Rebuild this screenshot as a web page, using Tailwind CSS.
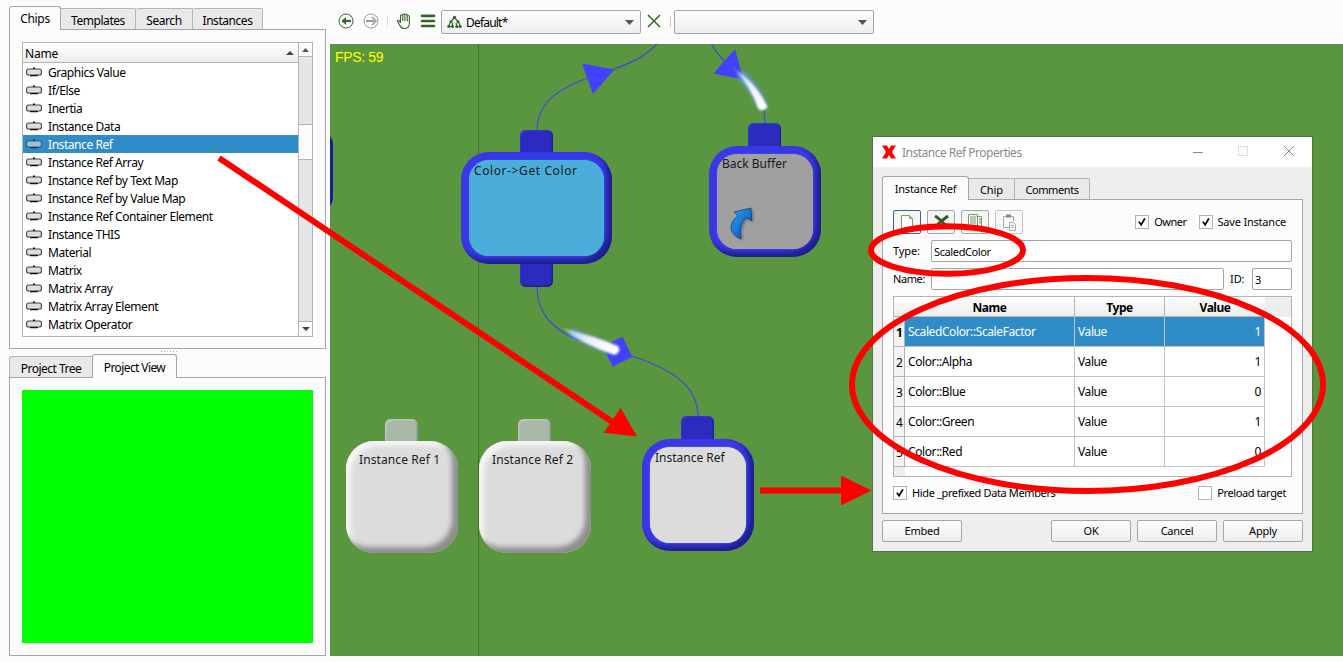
<!DOCTYPE html>
<html lang="en">
<head>
<meta charset="utf-8">
<title>Instance Ref</title>
<script src="https://cdn.jsdelivr.net/npm/@tailwindcss/browser@4"></script>
</head>
<body class="relative flex h-[662px] w-[1343px] overflow-hidden bg-[#fcfcfc] font-['Noto_Sans',sans-serif] text-[12px] leading-4 tracking-[-0.3px] whitespace-nowrap text-black">
<svg class="absolute h-0 w-0">
  <defs>
    <symbol id="chip" viewBox="0 0 16 10"><rect x=".6" y="2" width="14.8" height="6" rx="2" fill="#ddd" stroke="#444" stroke-width="1.1"/><path d="M7 .5h2v1.500H7zM4 8h8v1.300H4z" fill="#111"/></symbol>
    <symbol id="check" viewBox="0 0 14 14"><path d="M3.4 6.800l2.600 3.400 4.400-7.400" fill="none" stroke="#000" stroke-width="2"/></symbol>
    <linearGradient id="trail" x1="0" y1="0" x2="1" y2=".8"><stop offset="0" stop-color="#fff" stop-opacity=".3"/><stop offset=".5" stop-color="#eef"/><stop offset="1" stop-color="#fff"/></linearGradient>
    <linearGradient id="arrow" x1="0" y1="0" x2="1" y2="1"><stop stop-color="#28a8f8"/><stop offset="1" stop-color="#0644b0"/></linearGradient>
    <filter id="glow" x="-50%" y="-50%" width="200%" height="200%"><feGaussianBlur stdDeviation="2.500"/></filter>
    <filter id="soft"><feGaussianBlur stdDeviation=".8"/></filter>
  </defs>
</svg>

<!-- left docks -->
<aside class="flex w-[330px] shrink-0 flex-col pl-[9px] pt-[6px]">
  <div class="relative z-10 -mb-px flex h-[24px] items-end text-center">
    <div class="h-[24px] w-[52px] rounded-t-[3px] border border-b-0 border-[#a5a5a5] bg-[#fcfcfc] pt-[4px]">Chips</div>
    <div class="mb-px h-[21px] w-[75px] rounded-tr-[2px] border border-l-0 border-b-0 border-[#b4b4b4] bg-[#e9e9e9] pt-[4px] tracking-[-0.45px]">Templates</div>
    <div class="mb-px h-[21px] w-[57px] rounded-t-[2px] border border-l-0 border-b-0 border-[#b4b4b4] bg-[#e9e9e9] pt-[4px] tracking-[-0.45px]">Search</div>
    <div class="mb-px h-[21px] w-[70px] rounded-t-[2px] border border-l-0 border-b-0 border-[#b4b4b4] bg-[#e9e9e9] pt-[4px] tracking-[-0.45px]">Instances</div>
  </div>
  <section class="h-[320px] w-[317px] border border-[#a5a5a5] px-3 pt-3">
    <div class="flex h-[295px] w-[291px] border border-[#b4b4b4] bg-white">
      <div class="w-[276px]">
        <div class="flex h-[20px] items-center justify-between border-b border-[#b4b4b4] bg-linear-to-b from-white to-[#ececec] pl-[2px] pr-[4px]"><span class="pt-[2px] tracking-[-0.22px]">Name</span><svg class="h-[4px] w-[8px]"><path d="M0 4L4 0L8 4z" fill="#444"/></svg></div>
        <ul id="chips"></ul>
      </div>
      <div class="flex w-[14px] flex-col border-l border-[#b4b4b4] bg-[#e6e6e6]">
        <div class="flex h-[14px] items-center justify-center border-b border-[#b4b4b4] bg-[#fcfcfc]"><svg class="h-[4px] w-[7px]"><path d="M0 4L3.500 0L7 4z" fill="#555"/></svg></div>
        <div class="mt-[67px] h-[36px] border-y border-[#b4b4b4] bg-[#fcfcfc]"></div>
        <div class="mt-auto flex h-[15px] items-center justify-center border-t border-[#b4b4b4] bg-[#fcfcfc]"><svg class="h-[4px] w-[8px]"><path d="M0 0L4 4L8 0z" fill="#444"/></svg></div>
      </div>
    </div>
  </section>
  <div class="ml-[152px] mt-[2px] h-[1px] w-[17px] bg-[repeating-linear-gradient(90deg,#aaa_0_1px,transparent_1px_3px)]"></div>
  <div class="relative z-10 -mb-px mt-[2px] flex h-[24px] items-end text-center">
    <div class="mb-px h-[21px] w-[83px] rounded-tl-[3px] border border-r-0 border-b-0 border-[#b4b4b4] bg-[#e9e9e9] pt-[4px] tracking-[-0.5px]">Project Tree</div>
    <div class="h-[24px] w-[85px] rounded-t-[3px] border border-b-0 border-[#a5a5a5] bg-[#fcfcfc] pt-[5px] tracking-[-0.6px]">Project View</div>
  </div>
  <section class="h-[279px] w-[317px] border border-[#a5a5a5] p-3"><div class="h-[253px] w-[291px] bg-[#00ff00]"></div></section>
</aside>

<main class="flex w-[1013px] flex-col">
  <div class="flex h-[44px] items-center">
    <svg class="h-[44px] w-[111px]" fill="none">
      <g stroke="#36652a"><circle cx="16" cy="21" r="7"/><path d="M12.500 21H21" stroke-width="2.200"/><path d="M16 17l-4.500 4 4.500 4z" fill="#36652a" stroke="none"/></g>
      <g stroke="#999"><circle cx="41" cy="21" r="7"/><path d="M36 21h8" stroke-width="2"/><path d="M42 17l4 4-4 4" stroke-width="1.500"/></g>
      <path d="M57.500 15v12" stroke="#ddd" stroke-width="1"/>
      <path d="M70.500 22v-6.500q1-1.500 2 0M72.700 21v-6q1.100-2 2.200 0v6M75 14.700q1.200-1.500 2.200.3v6.500M77.200 16q1.300-1.200 2.200.5v7.500q-.5 4.500-5 4.500-3.500 0-4.500-3l-2.600-4.500q.5-1.500 2 0l1.500 2" stroke="#36652a" stroke-width="1.100"/>
      <path d="M92 15.800h12M92 21h12M92 26h12" stroke="#36652a" stroke-width="2.700" stroke-linecap="round"/>
    </svg>
    <div class="flex h-[24px] w-[200px] items-center rounded-[2px] border border-[#a5a5a5] bg-linear-to-b from-[#fdfdfd] to-[#eee] pl-[5px] pr-[6px]">
      <svg class="h-[14px] w-[15px]" fill="#36652a"><path d="M7.500 2.500L3.500 7L1.500 11.500H5L5.700 8M7.500 2.500L11.500 7L13.500 11.500H10L9 8" fill="none" stroke="#36652a" stroke-width="1.200"/><circle cx="7.500" cy="2.500" r="1.700"/><circle cx="4" cy="6.800" r="1.500"/><circle cx="11" cy="6.800" r="1.500"/><circle cx="1.800" cy="11.500" r="1.500"/><circle cx="5.500" cy="11.500" r="1.500"/><circle cx="9.700" cy="11.500" r="1.500"/><circle cx="13.200" cy="11.500" r="1.500"/></svg>
      <span class="ml-[4px] pt-px tracking-[-0.8px]">Default*</span><svg class="ml-auto h-[5px] w-[9px]"><path d="M0 0L4.500 5L9 0z" fill="#555"/></svg>
    </div>
    <svg class="h-[44px] w-[33px]"><path d="M7 15l12 12M19 15L7 27" stroke="#36652a" stroke-width="1.500"/><path d="M29.500 16v11" stroke="#ccc"/></svg>
    <div class="flex h-[24px] w-[200px] items-center rounded-[2px] border border-[#a5a5a5] bg-linear-to-b from-[#fdfdfd] to-[#eee] pr-[6px]"><svg class="ml-auto h-[5px] w-[9px]"><path d="M0 0L4.500 5L9 0z" fill="#555"/></svg></div>
  </div>

  <!-- graph canvas -->
  <div class="relative h-[612px] overflow-hidden bg-[#5a953f] tracking-[0.25px] text-[#151c20]">
    <div class="absolute left-[148px] top-0 h-full w-px bg-[#41702e]"></div>
    <div class="absolute -left-[109px] top-[88px] h-[78px] w-[112px] rounded-[12px] bg-[#1d1d91]"></div>
    <span class="absolute left-[5px] top-[5px] font-['Liberation_Sans',sans-serif] text-[14px] tracking-[-0.35px] text-[#ffff00]">FPS: 59</span>
    <svg class="absolute left-0 top-0 h-[612px] w-[1013px]" viewBox="330 44 1013 612" fill="none">
      <g stroke="#4545df" stroke-width="1.200">
        <path d="M537 131C537 100 563 87 590 77L614 69C637 61 648 54 658 43"/>
        <path d="M711 43Q716 53 728 65M764 110L765 124"/>
        <path d="M537 286C537 314 552 329 580 341M632 356C680 372 698 390 698 417"/>
      </g>
      <g fill="#4141ff"><path d="M582 63.500L614.500 69.500L593 94z"/><path d="M735 49L713.500 73.500L743.500 79.500z"/><path d="M622.500 336.700L632.500 357L612.500 366.500L603 346z"/></g>
      <path d="M740 74Q755 87 763 107" stroke="#5a9cff" stroke-width="8" opacity=".9" filter="url(#glow)"/>
      <path d="M733 68Q756 82 767.500 107Q764 112 758.500 109Q750 85 733 68z" fill="url(#trail)" filter="url(#soft)"/>
      <path d="M570 332Q588 341 613 350" stroke="#5a9cff" stroke-width="7" opacity=".9" filter="url(#glow)"/>
      <path d="M562 328Q594 336 618 346Q622 351 615 355Q584 345 562 328z" fill="url(#trail)" filter="url(#soft)"/>
    </svg>
    <div class="absolute left-[190px] top-[86px] h-[30px] w-[33px] rounded-[6px] bg-[#2b2bbd] shadow-[inset_-1px_-1px_2px_#1c1c85,inset_1px_1px_2px_#3b3bdd]"></div>
    <div class="absolute left-[190px] top-[212px] h-[31px] w-[33px] rounded-[6px] bg-[#2b2bbd] shadow-[inset_-1px_-1px_2px_#1c1c85,inset_1px_1px_2px_#3b3bdd]"></div>
    <div class="absolute left-[131px] top-[108px] h-[112px] w-[151px] rounded-[28px] bg-[#3838e6] p-[8px] shadow-[inset_-5px_-5px_5px_#1f1f8f]"><div class="h-full rounded-[20px] bg-[#4badda] pl-[5px] pt-[3px] tracking-[0.6px] shadow-[0_0_1px_#4badda]">Color-&gt;Get Color</div></div>
    <div class="absolute left-[418px] top-[79px] h-[30px] w-[33px] rounded-[6px] bg-[#2b2bbd] shadow-[inset_-1px_-1px_2px_#1c1c85,inset_1px_1px_2px_#3b3bdd]"></div>
    <div class="absolute left-[379px] top-[102px] h-[111px] w-[112px] rounded-[28px] bg-[#3838e6] p-[8px] shadow-[inset_-5px_-5px_5px_#1f1f8f]">
      <div class="h-full rounded-[20px] bg-[#a0a0a0] pl-[5px] pt-[2px] tracking-[0px] shadow-[0_0_1px_#a0a0a0]">Back Buffer
        <svg class="ml-[7px] mt-[34px] h-[40px] w-[32px] overflow-visible"><path d="M5.300 6L22 2L22.700 15L17 11.500Q9 19 12 33Q2 29 2 21Q3 14 9 10z" fill="#444" opacity=".5" filter="url(#soft)" transform="translate(2 1.500)"/><path d="M5.300 6L22 2L22.700 15L17 11.500Q9 19 12 33Q2 29 2 21Q3 14 9 10z" fill="url(#arrow)" stroke="#143f7c" stroke-width=".8"/></svg>
      </div>
    </div>
    <div class="absolute left-[351px] top-[372px] h-[30px] w-[33px] rounded-[6px] bg-[#2b2bbd] shadow-[inset_-1px_-1px_2px_#1c1c85,inset_1px_1px_2px_#3b3bdd]"></div>
    <div class="absolute left-[312px] top-[395px] h-[112px] w-[112px] rounded-[28px] bg-[#3838e6] p-[8px] shadow-[inset_-5px_-5px_5px_#1f1f8f]"><div class="h-full rounded-[20px] bg-[#dcdcdc] pl-[5px] pt-[3px] tracking-[0px] shadow-[0_0_1px_#dcdcdc]">Instance Ref</div></div>
    <div class="absolute left-[55px] top-[375px] h-[30px] w-[33px] rounded-[6px] bg-[#a9b9a8] shadow-[inset_-1px_-1px_2px_#7c887b,inset_1px_1px_2px_#c7d1c6]"></div>
    <div class="absolute left-[16px] top-[397px] h-[112px] w-[112px] rounded-[28px] bg-[#dcdcdc] pl-[13px] pt-[11px] tracking-[0.1px] shadow-[inset_-6px_-6px_5px_#8e8e8e,inset_5px_5px_5px_#f5f5f5]">Instance Ref 1</div>
    <div class="absolute left-[188px] top-[375px] h-[30px] w-[33px] rounded-[6px] bg-[#a9b9a8] shadow-[inset_-1px_-1px_2px_#7c887b,inset_1px_1px_2px_#c7d1c6]"></div>
    <div class="absolute left-[149px] top-[397px] h-[112px] w-[112px] rounded-[28px] bg-[#dcdcdc] pl-[13px] pt-[11px] tracking-[0.1px] shadow-[inset_-6px_-6px_5px_#8e8e8e,inset_5px_5px_5px_#f5f5f5]">Instance Ref 2</div>
  </div>
</main>

<!-- properties dialog -->
<div class="absolute left-[872px] top-[136px] flex h-[416px] w-[441px] flex-col border border-[#4f7540] bg-[#eeeeee] text-[11px] leading-4 tracking-[-0.1px]">
  <header class="flex h-[30px] items-center bg-white pl-[9px] text-[12px] tracking-[-0.5px] text-[#8a8a8a]">
    <svg class="h-[14px] w-[14px]"><path d="M0 .5h5l2 3.500 2-3.500h5L10 7l4 6.500H9l-2-3.500-2 3.500H0L4 7z" fill="#f00"/></svg>
    <span class="ml-[6px] pt-px">Instance Ref Properties</span>
    <svg class="ml-auto h-[30px] w-[123px]" fill="none"><path d="M4 15.500h10" stroke="#888"/><rect x="49.500" y="9.500" width="9" height="9" stroke="#ddd"/><path d="M95 9l10 10M105 9L95 19" stroke="#888"/></svg>
  </header>
  <div class="flex flex-1 flex-col px-[9px] pt-[9px]">
    <div class="relative z-10 -mb-px flex h-[24px] items-end text-center">
      <div class="h-[24px] w-[87px] rounded-t-[3px] border border-b-0 border-[#a5a5a5] bg-[#fcfcfc] pt-[4px] tracking-[-0.2px]">Instance Ref</div>
      <div class="mb-px h-[21px] w-[46px] border border-l-0 border-b-0 border-[#b4b4b4] bg-[#e9e9e9] pt-[3px]">Chip</div>
      <div class="mb-px h-[21px] w-[75px] rounded-tr-[2px] border border-l-0 border-b-0 border-[#b4b4b4] bg-[#e9e9e9] pt-[3px] tracking-[-0.4px]">Comments</div>
    </div>
    <section class="flex h-[315px] w-[421px] flex-col border border-[#a5a5a5] bg-[#fcfcfc] px-[10px] pt-[10px]">
      <div class="flex h-[24px] items-center gap-[6px]">
        <div class="h-[24px] w-[28px] rounded-[2px] border border-[#32688f] bg-[#f5f5f5]"><svg class="h-[22px] w-[26px]"><path d="M7.500 4.500h8l3 3v12h-11zM15.500 4.500v3h3" fill="#fff" stroke="#7b9b73"/></svg></div>
        <div class="h-[24px] w-[28px] rounded-[2px] border border-[#a5a5a5] bg-[#f5f5f5]"><svg class="h-[22px] w-[26px]"><path d="M7 5q4 2 13 12M20 5Q13 10 7 16" fill="none" stroke="#2f5e23" stroke-width="3"/></svg></div>
        <div class="h-[24px] w-[28px] rounded-[2px] border border-[#a5a5a5] bg-[#f5f5f5]"><svg class="h-[22px] w-[26px]"><path d="M14.500 5.500h5v12h-5M6.500 3.500h9v12h-9zM8 6h6M8 8h6M8 10h6M8 12h6M17 8h2M17 10h2M17 12h2" fill="none" stroke="#7b9b73"/></svg></div>
        <div class="h-[24px] w-[28px] rounded-[2px] border border-[#c5c5c5] bg-[#f8f8f8]"><svg class="h-[22px] w-[26px]" fill="none" stroke="#aaa"><path d="M13 16.500H7.500v-11h10V10"/><path d="M10 5h5" stroke-width="3" stroke="#888"/><path d="M13.500 11.500h4l2 2v6h-6z" fill="#fff"/><path d="M15 14.500h3M15 16.500h3"/></svg></div>
        <div class="ml-auto mr-[6px] flex items-center">
          <svg class="h-[14px] w-[14px] border border-[#b4b4b4] bg-white"><use href="#check"/></svg><span class="ml-[5px] mr-[12px] tracking-[-0.5px]">Owner</span>
          <svg class="h-[14px] w-[14px] border border-[#b4b4b4] bg-white"><use href="#check"/></svg><span class="ml-[5px] tracking-[-0.2px]">Save Instance</span>
        </div>
      </div>
      <div class="mt-[6px] flex h-[22px] items-center"><span class="w-[38px]">Type:</span><div class="h-[22px] flex-1 rounded-[2px] border border-[#a5a5a5] bg-white pl-[2px] pt-[3px] tracking-[-0.38px]">ScaledColor</div></div>
      <div class="mt-[6px] flex h-[22px] items-center"><span class="w-[38px] tracking-[-0.4px]">Name:</span><div class="h-[22px] w-[293px] rounded-[2px] border border-[#a5a5a5] bg-white"></div><span class="ml-[6px] w-[22px]">ID:</span><div class="h-[22px] w-[40px] rounded-[2px] border border-[#a5a5a5] bg-white pl-[2px] pt-[3px]">3</div></div>
      <div class="mt-[6px] h-[181px] w-[399px] border border-[#b4b4b4] bg-white">
        <div class="flex h-[20px] w-full bg-[#eee] text-center text-[12px] font-bold tracking-[-0.5px]">
          <div class="h-[20px] w-[181px] border-r border-b border-[#b4b4b4] bg-linear-to-b from-white to-[#ececec] pl-[11px] pt-[3px]">Name</div>
          <div class="h-[20px] w-[90px] border-r border-b border-[#b4b4b4] bg-linear-to-b from-white to-[#ececec] pt-[3px]">Type</div>
          <div class="h-[20px] w-[100px] border-b border-[#b4b4b4] bg-linear-to-b from-white to-[#ececec] pt-[3px]">Value</div>
        </div>
        <div id="members"></div>
        <div class="h-[9px] w-[11px] bg-[#eee]"></div>
      </div>
      <div class="mt-[9px] flex h-[14px] items-center">
        <svg class="h-[14px] w-[14px] border border-[#b4b4b4] bg-white"><use href="#check"/></svg><span class="ml-[5px] tracking-[-0.37px]">Hide _prefixed Data Members</span>
        <div class="ml-auto h-[14px] w-[14px] border border-[#b4b4b4] bg-white"></div><span class="ml-[5px] mr-[6px] tracking-[-0.37px]">Preload target</span>
      </div>
    </section>
    <div class="mt-[6px] flex h-[22px] gap-[6px] text-center leading-5 tracking-[-0.25px]">
      <div class="mr-auto w-[80px] rounded-[2px] border border-[#a5a5a5] bg-linear-to-b from-[#fdfdfd] to-[#eee]">Embed</div>
      <div class="w-[80px] rounded-[2px] border border-[#a5a5a5] bg-linear-to-b from-[#fdfdfd] to-[#eee]">OK</div>
      <div class="w-[80px] rounded-[2px] border border-[#a5a5a5] bg-linear-to-b from-[#fdfdfd] to-[#eee]">Cancel</div>
      <div class="w-[80px] rounded-[2px] border border-[#a5a5a5] bg-linear-to-b from-[#fdfdfd] to-[#eee]">Apply</div>
    </div>
  </div>
</div>

<!-- red annotations -->
<svg class="pointer-events-none absolute left-0 top-0 h-[662px] w-[1343px]" fill="none" stroke="#ff0000" stroke-width="6">
  <path d="M219 158L614 423M760 490.500H843"/>
  <path d="M603.700 432.700L620.700 408L637 436.500zM841 475.500L871.500 490.500L841 505.500z" fill="#ff0000" stroke="none"/>
  <ellipse cx="947" cy="250" rx="76" ry="23.700"/><ellipse cx="1087.500" cy="384.500" rx="235.500" ry="106.500"/>
</svg>

<script>
const chips = ["Graphics Value","If/Else","Inertia","Instance Data","Instance Ref","Instance Ref Array","Instance Ref by Text Map","Instance Ref by Value Map","Instance Ref Container Element","Instance THIS","Material","Matrix","Matrix Array","Matrix Array Element","Matrix Operator"];
document.getElementById("chips").innerHTML = chips.map((t, i) => `<li class="flex h-[18px] items-center pl-[3px] tracking-[-0.44px] ${i === 4 ? "bg-[#308cc6] text-white" : ""}"><svg class="h-[10px] w-[16px] shrink-0 ${i === 4 ? "opacity-65" : ""}"><use href="#chip"/></svg><span class="ml-[6px] pt-[2px]">${t}</span></li>`).join("");
const members = [["ScaledColor::ScaleFactor",1],["Color::Alpha",1],["Color::Blue",0],["Color::Green",1],["Color::Red",0]];
document.getElementById("members").innerHTML = members.map(([n, v], i) => `<div class="flex h-[30px] w-[371px] text-[12px] leading-[30px] tracking-[-0.4px]"><div class="w-[11px] border-r border-b border-[#b4b4b4] bg-[#f3f3f3] pl-[2px] leading-[31px] ${i === 0 ? "font-bold" : ""}">${i + 1}</div><div class="w-[170px] border-r border-b border-[#c4c4c4] pl-[3px] ${i === 0 ? "bg-[#308cc6] text-white" : ""}">${n}</div><div class="w-[90px] border-r border-b border-[#c4c4c4] pl-[3px] ${i === 0 ? "bg-[#308cc6] text-white" : ""}">Value</div><div class="w-[100px] border-r border-b border-[#c4c4c4] pr-[3px] text-right ${i === 0 ? "bg-[#308cc6] text-white" : ""}">${v}</div></div>`).join("");
</script>
</body>
</html>
